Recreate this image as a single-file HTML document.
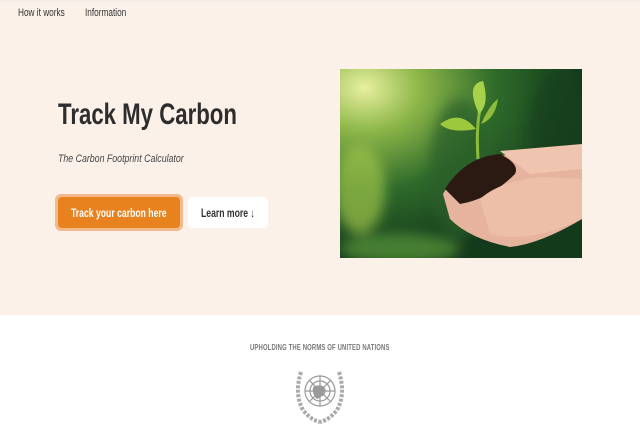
<!DOCTYPE html>
<html><head><meta charset="utf-8"><style>
*{margin:0;padding:0;box-sizing:border-box}
body{width:640px;height:426px;overflow:hidden;font-family:"Liberation Sans",sans-serif;background:#fff;position:relative}
.hero{position:absolute;left:0;top:0;width:640px;height:315px;background:#fcf1e9;border-top:2px solid #f3ebe6}
.t{position:absolute;white-space:nowrap;transform-origin:0 0}
</style></head><body>
<div class="hero"></div>
<div class="t" style="left:18px;top:7px;font-size:11px;color:#333;transform:scaleX(.75)">How it works</div>
<div class="t" style="left:85px;top:7px;font-size:11px;color:#333;transform:scaleX(.75)">Information</div>
<div class="t" style="left:58px;top:98px;font-size:30px;font-weight:bold;color:#2d2d2d;transform:scaleX(.74)">Track My Carbon</div>
<div class="t" style="left:58px;top:153px;font-size:11px;font-style:italic;color:#444;transform:scaleX(.8)">The Carbon Footprint Calculator</div>
<div style="position:absolute;left:55px;top:194px;width:128px;height:37px;border-radius:6px;background:#f2b98a"></div>
<div style="position:absolute;left:58px;top:197px;width:122px;height:31px;border-radius:4px;background:#e8821f"></div>
<div class="t" style="left:71px;top:206px;font-size:12px;font-weight:bold;color:#fff;transform:scaleX(.72)">Track your carbon here</div>
<div style="position:absolute;left:188px;top:197px;width:80px;height:31px;border-radius:4px;background:#fff"></div>
<div class="t" style="left:201px;top:206px;font-size:12px;font-weight:bold;color:#333;transform:scaleX(.72)">Learn more ↓</div>
<svg style="position:absolute;left:340px;top:69px" width="242" height="189" viewBox="0 0 242 189">
<defs>
<radialGradient id="g1" cx="0.1" cy="0.1" r="0.9"><stop offset="0" stop-color="#e8f0a0"/><stop offset=".25" stop-color="#8fb84a"/><stop offset=".6" stop-color="#2f6b2a"/><stop offset="1" stop-color="#143a1c"/></radialGradient>
<filter id="b"><feGaussianBlur stdDeviation="6"/></filter>
</defs>
<rect width="242" height="189" fill="url(#g1)"/>
<g filter="url(#b)" opacity=".7"><ellipse cx="20" cy="120" rx="25" ry="45" fill="#9cc24a"/><ellipse cx="120" cy="100" rx="30" ry="70" fill="#2a5e2a"/><ellipse cx="220" cy="60" rx="30" ry="60" fill="#16401e"/><ellipse cx="60" cy="180" rx="60" ry="15" fill="#5a9a3a"/></g>
<path d="M103 125 Q120 95 170 85 L242 80 L242 150 Q200 175 170 178 Q130 170 110 150 Z" fill="#e6b49e"/>
<path d="M105 120 Q125 88 160 85 Q180 95 175 105 Q150 130 120 135 Z" fill="#2a1a12"/>
<path d="M160 82 L242 75 L242 100 L190 105 Z" fill="#f0c5b0"/>
<path d="M140 130 Q160 112 200 108 L242 110 L242 150 Q190 175 150 165 Z" fill="#edbfa8"/>
<path d="M138 90 Q136 60 140 40" stroke="#8cbc3a" stroke-width="3" fill="none"/>
<path d="M139 45 Q125 15 143 12 Q150 35 139 45 Z" fill="#a8d24a"/>
<path d="M136 60 Q110 65 100 55 Q120 40 136 60 Z" fill="#9cc83e"/>
<path d="M141 55 Q150 35 158 30 Q155 50 141 55 Z" fill="#8dbd3a"/>
</svg>
<div class="t" style="left:250px;top:343px;font-size:8px;font-weight:bold;color:#777;letter-spacing:.2px;transform:scaleX(.74)">UPHOLDING THE NORMS OF UNITED NATIONS</div>
<svg style="position:absolute;left:293px;top:364px" width="54" height="62" viewBox="0 0 54 62">
<g fill="none" stroke="#999" stroke-width="1.2">
<circle cx="27" cy="27" r="15"/><circle cx="27" cy="27" r="10"/><circle cx="27" cy="27" r="5"/>
<path d="M12 27H42M27 12V42M16 16L38 38M38 16L16 38"/>
</g>
<g fill="none" stroke="#aaa" stroke-width="4" stroke-dasharray="3 1.5">
<path d="M8 8Q1 30 10 46Q18 56 27 58"/><path d="M46 8Q53 30 44 46Q36 56 27 58"/>
</g>
<path d="M20 23Q27 19 32 25Q30 33 24 35Q19 31 20 23Z" fill="#999"/>
</svg>
</body></html>
